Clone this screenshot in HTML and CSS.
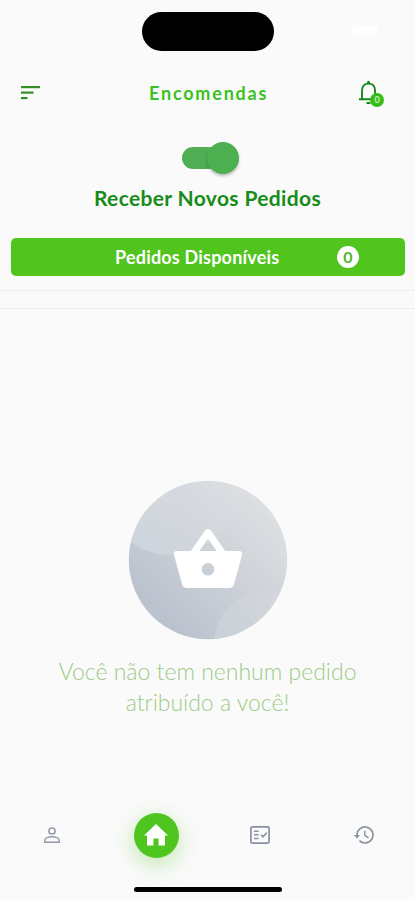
FILE: index.html
```html
<!DOCTYPE html>
<html lang="pt-BR">
<head>
  <meta charset="UTF-8">
  <meta name="viewport" content="width=device-width, initial-scale=1.0">
  <title>Encomendas</title>
  <link rel="stylesheet" href="styles.css">
</head>
<body>
  <div class="screen">
    <div class="status">
      <div class="island"></div>
      <div class="battery"></div>
    </div>

    <header class="header">
      <svg class="menu" width="19" height="14" viewBox="0 0 19 14" fill="#328f28">
        <rect width="19" height="2.2"/>
        <rect y="5.5" width="12.5" height="2.2"/>
        <rect y="11" width="6.5" height="2.2"/>
      </svg>
      <h1 class="title">Encomendas</h1>
      <div class="bell">
        <svg width="21" height="25" viewBox="0 0 21 25" fill="none" stroke="#17871a" stroke-width="1.9">
          <path d="M0 19.300h20M3 19V10.500C3 6 5.500 3.600 9.500 3.600S16 6 16 10.500v8.500"/>
          <path d="M7.500 23h4" stroke-width="2"/>
          <path d="M8 2.200a1.500 1.500 0 0 1 3 0v1.500H8z" fill="#17871a" stroke="none"/>
        </svg>
        <span class="badge">0</span>
      </div>
    </header>

    <!-- Receber pedidos -->
    <section class="receive">
      <div class="switch"><div class="thumb"></div></div>
      <h2 class="receive-text">Receber Novos Pedidos</h2>
    </section>

    <div class="available">
      <span class="available-text">Pedidos Disponíveis</span>
      <span class="count">0</span>
    </div>
    <div class="divider"></div>

    <!-- Lista vazia -->
    <main class="empty">
      <svg class="basket" width="160" height="160" viewBox="0 0 160 160">
        <defs>
          <linearGradient id="base" x1="0.9" y1="0.15" x2="0.2" y2="0.85">
            <stop offset="0" stop-color="#dee0e3"/>
            <stop offset="0.5" stop-color="#cdd2d8"/>
            <stop offset="1" stop-color="#bac2ce"/>
          </linearGradient>
          <linearGradient id="shine" x1="0" y1="0.5" x2="1" y2="0.3">
            <stop offset="0" stop-color="#dae0e6" stop-opacity="0.6"/>
            <stop offset="0.5" stop-color="#dae0e6" stop-opacity="0.35"/>
            <stop offset="1" stop-color="#dfe2e5" stop-opacity="0.1"/>
          </linearGradient>
          <linearGradient id="corner" x1="0.1" y1="0.8" x2="0.6" y2="0">
            <stop offset="0" stop-color="#dce0e5" stop-opacity="0.45"/>
            <stop offset="1" stop-color="#dce0e5" stop-opacity="0.15"/>
          </linearGradient>
          <clipPath id="round"><circle cx="80" cy="80" r="79.2"/></clipPath>
        </defs>
        <g clip-path="url(#round)">
          <rect width="160" height="160" fill="url(#base)"/>
          <circle cx="43" cy="7" r="68" fill="url(#shine)"/>
          <circle cx="139" cy="164" r="53" fill="url(#corner)"/>
        </g>
        <path d="M65 74L80 52.500 95 74" fill="none" stroke="#fff" stroke-width="7" stroke-linejoin="round"/>
        <path fill="#fff" fill-rule="evenodd" d="M49 71h62q4 0 3 4l-8 29q-1 4-5 4H59q-4 0-5-4l-8-29q-1-4 3-4zM80 83a6.300 6.300 0 1 0 0 12.600a6.300 6.300 0 1 0 0-12.600z"/>
      </svg>
      <p class="empty-text">Você não tem nenhum pedido<br>atribuído a você!</p>
    </main>

    <nav class="nav">
      <a class="nav-item">
        <svg width="16" height="16" viewBox="0 0 16 16" fill="none" stroke="#929aa6" stroke-width="1.5">
          <circle cx="8" cy="4" r="3.1"/>
          <path d="M.8 15.200v-2C.8 11 4.500 9.800 8 9.800s7.200 1.200 7.200 3.400v2z"/>
        </svg>
      </a>
      <a class="nav-item">
        <span class="home">
          <svg width="26" height="24" viewBox="0 0 26 24" fill="#fff">
            <path d="M13 1L1 12.500h3V22.500h6.500v-7h5v7H22v-10h3z"/>
          </svg>
        </span>
      </a>
      <a class="nav-item">
        <svg width="20" height="18" viewBox="0 0 20 18" fill="none" stroke="#8791a2" stroke-width="1.7">
          <rect x=".9" y=".9" width="18.200" height="16.200" rx="1.500"/>
          <path d="M4 5.200h4.500M4 8.800h4.500M4 12.400h4.500" stroke-width="1.500"/>
          <path d="M11 8.800l2 2 3.700-4" stroke-width="1.600"/>
        </svg>
      </a>
      <a class="nav-item">
        <svg width="20" height="18" viewBox="0 0 20 18" fill="none" stroke="#8a94a1" stroke-width="1.700">
          <path d="M3 9A8 8 0 1 1 5.400 14.700"/>
          <path d="M0 9h6l-3 3.500z" fill="#8a94a1" stroke="none"/>
          <path d="M10.800 4.800v4.500l3.700 2.500" stroke-width="1.400"/>
        </svg>
      </a>
    </nav>
    <div class="home-bar"></div>
  </div>
</body>
</html>
```
FILE: styles.css
```css
body {
  margin: 0;
  background: #fafafa;
  font-family: Lato, "Liberation Sans", sans-serif;
}

.screen {
  width: 415px;
  height: 900px;
  display: flex;
  flex-direction: column;
  overflow: hidden;
  box-sizing: border-box;
  padding-top: 12px;
}

svg {
  display: block;
}

.status {
  display: grid;
  grid-template-columns: 142px 132px 1fr;
  align-items: center;
}

.island {
  grid-column: 2;
  height: 39px;
  border-radius: 20px;
  background: #000;
}

.battery {
  width: 26px;
  height: 11px;
  margin-left: 78px;
  border-radius: 4px;
  background: #fefefe;
}

.header {
  display: grid;
  grid-template-columns: 128px 1fr 25px;
  align-items: center;
  height: 40px;
  margin-top: 22px;
  padding: 0 31px 0 21px;
}

.title {
  margin: 0;
  font-size: 18px;
  font-weight: 700;
  letter-spacing: 1.8px;
  color: #39c221;
}

.bell {
  position: relative;
  width: 25px;
  height: 25px;
  margin-top: -2px;
}

.badge {
  position: absolute;
  right: 0;
  bottom: -2px;
  width: 14px;
  height: 14px;
  border-radius: 50%;
  background: #36bd18;
  color: #c5efb8;
  font-size: 9px;
  font-weight: 700;
  line-height: 14px;
  text-align: center;
}

.receive {
  display: flex;
  flex-direction: column;
  align-items: center;
  margin-top: 34px;
}

.switch {
  display: flex;
  align-items: center;
  justify-content: flex-end;
  width: 57px;
  height: 22px;
  margin-left: 5px;
  border-radius: 11px;
  background: linear-gradient(to right, #4fae54 45%, transparent 80%);
}

.thumb {
  width: 32px;
  height: 32px;
  border-radius: 50%;
  background: #4caf50;
  box-shadow: 0 2px 3px rgba(0, 0, 0, 0.25);
}

.receive-text {
  margin: 16px 0 0;
  font-size: 21px;
  font-weight: 700;
  line-height: 26px;
  letter-spacing: 0.35px;
  color: #178c18;
}

.available {
  display: grid;
  grid-template-columns: 104px 222px 22px;
  align-items: center;
  height: 38px;
  margin: 27px 10px 0 11px;
  border-radius: 5px;
  background: #51c41e;
}

.available-text {
  grid-column: 2;
  color: #fff;
  font-size: 18px;
  font-weight: 700;
  letter-spacing: 0.2px;
  white-space: nowrap;
}

.count {
  width: 22px;
  height: 22px;
  border-radius: 50%;
  background: #fff;
  color: #51b52a;
  font-size: 16px;
  font-weight: 700;
  line-height: 22px;
  text-align: center;
}

.divider {
  height: 17px;
  margin-top: 14px;
  border-top: 1px solid #ededf0;
  border-bottom: 1px solid #ededf0;
}

.empty {
  display: flex;
  flex-direction: column;
  align-items: center;
  margin-top: 171px;
}

.empty-text {
  margin: 16px 0 0;
  font-size: 23px;
  font-weight: 300;
  line-height: 31px;
  text-align: center;
  color: #9dcb86;
}

.nav {
  display: grid;
  grid-template-columns: repeat(4, 104px);
  align-items: center;
  height: 46px;
  margin-top: auto;
}

.nav-item {
  display: flex;
  justify-content: center;
}

.home {
  display: flex;
  align-items: center;
  justify-content: center;
  width: 45px;
  height: 45px;
  border-radius: 50%;
  background: #4fc51f;
  box-shadow: 0 6px 22px rgba(79, 197, 31, 0.35);
}

.home-bar {
  width: 148px;
  height: 5px;
  margin: 29px auto 8px;
  border-radius: 3px;
  background: #000;
}
```
